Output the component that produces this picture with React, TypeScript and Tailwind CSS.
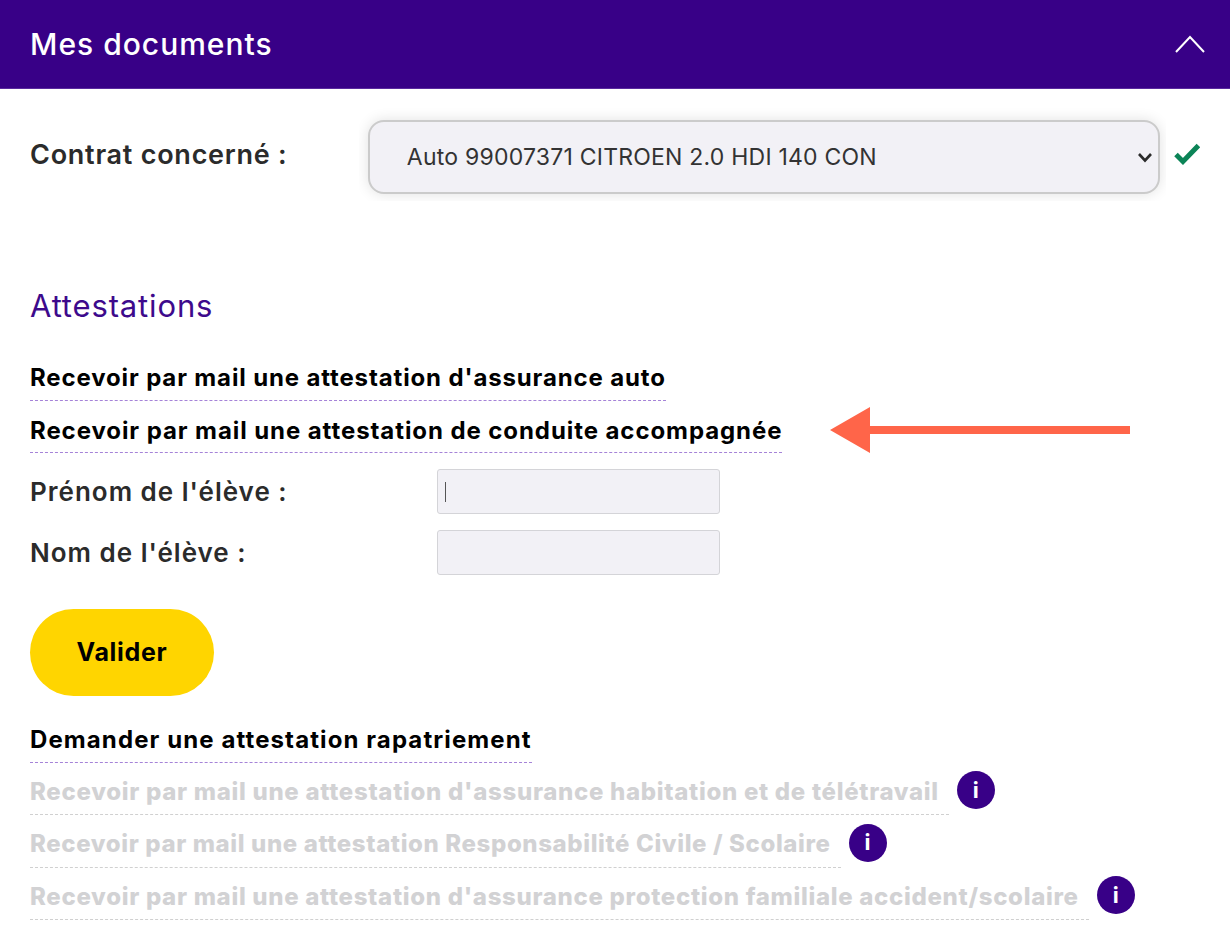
const font = "font-['Inter','Liberation_Sans',sans-serif]";

function InfoBadge() {
  return (
    <span className="ml-2 mb-[6px] flex h-[38px] w-[38px] shrink-0 items-center justify-center rounded-full bg-[#380087] text-[22px] font-bold text-white">
      i
    </span>
  );
}

function DocLink({ label, disabled, info, tracking }: { label: string; disabled?: boolean; info?: boolean; tracking: string }) {
  return (
    <div className="flex h-[52.5px] items-end">
      <span
        className={
          disabled
            ? `h-[52.5px] whitespace-nowrap border-b border-dashed border-[#d0d0d0] pr-[10px] pt-[12px] text-[24px] font-extrabold leading-[33px] text-[#d2d2d4] ${tracking}`
            : `h-[52.5px] whitespace-nowrap border-b border-dashed border-[#a583d8] pt-[13px] text-[24px] font-bold leading-[33px] text-black ${tracking}`
        }
      >
        {label}
      </span>
      {info && <InfoBadge />}
    </div>
  );
}

function Field({ label, focused }: { label: string; focused?: boolean }) {
  return (
    <div className="flex h-[45px] items-center">
      <label className="w-[407px] text-[26px] font-semibold tracking-[1px] text-[#2b2b2b]">{label}</label>
      <div className="flex h-[45px] w-[283px] items-center rounded-[3px] border border-[#d4d4d8] bg-[#f2f1f6] pl-[7px]">
        {focused && <span className="h-[20px] w-px bg-[#555]" />}
      </div>
    </div>
  );
}

export default function App() {
  return (
    <div className={`relative h-[952px] w-[1230px] overflow-hidden bg-white ${font}`}>
      <header className="flex h-[89px] items-center justify-between border-b border-[#5a2a9e] bg-[#380087] pl-[30px] pr-[25px]">
        <h2 className="text-[30px] font-medium tracking-[1px] text-white">Mes documents</h2>
        <svg width="30" height="18" viewBox="0 0 30 18" fill="none" stroke="white" strokeWidth="2">
          <path d="M1 17 L15 2 L29 17" />
        </svg>
      </header>

      <main className="px-[30px]">
        <div className="flex h-[112px] items-start">
          <label className="mt-[48px] w-[330px] text-[27px] leading-[36px] font-semibold tracking-[0.75px] text-[#2b2b2b]">
            Contrat concerné :
          </label>
          <div className="relative overflow-hidden px-[9px] pb-[7px] pt-[31px]">
            <select className="block h-[74px] w-[792px] appearance-none rounded-[16px] border-2 border-[#cbcbcb] bg-[#f2f1f6] pl-[37px] pr-1 text-[23px] tracking-[0.22px] text-[#333] shadow-[0_0_14px_rgba(0,0,0,0.12)] outline-none">
              <option>Auto 99007371 CITROEN 2.0 HDI 140 CON</option>
            </select>
            <svg className="absolute left-[778px] top-[63px]" width="16" height="11" viewBox="0 0 16 11" fill="none" stroke="#2b2b2b" strokeWidth="2.6">
              <path d="M2 2 L8 8.5 L14 2" />
            </svg>
          </div>
          <svg className="mt-[54px] ml-[8px]" width="26" height="22" viewBox="0 0 26 22" fill="none" stroke="#0b8457" strokeWidth="5">
            <path d="M2 11.5 L9 18.5 L24.5 2.5" />
          </svg>
        </div>

        <h3 className="mt-[84px] text-[31px] leading-[42px] font-normal tracking-[0.85px] text-[#3d0a8c]">Attestations</h3>

        <div className="mt-[21px]">
          <DocLink tracking="tracking-[0.86px]" label="Recevoir par mail une attestation d'assurance auto" />
          <DocLink tracking="tracking-[0.92px]" label="Recevoir par mail une attestation de conduite accompagnée" />
        </div>

        <div className="mt-[16px] flex flex-col gap-[16px]">
          <Field label="Prénom de l'élève :" focused />
          <Field label="Nom de l'élève :" />
        </div>

        <button className="mt-[34px] h-[87px] w-[184px] rounded-[44px] bg-[#ffd500] text-[25px] font-bold tracking-[0.7px] text-black">
          Valider
        </button>

        <div className="mt-[14px]">
          <DocLink tracking="tracking-[1.1px]" label="Demander une attestation rapatriement" />
          <DocLink disabled info tracking="tracking-[0.7px]" label="Recevoir par mail une attestation d'assurance habitation et de télétravail" />
          <DocLink disabled info tracking="tracking-[0.62px]" label="Recevoir par mail une attestation Responsabilité Civile / Scolaire" />
          <DocLink disabled info tracking="tracking-[0.69px]" label="Recevoir par mail une attestation d'assurance protection familiale accident/scolaire" />
        </div>
      </main>

      {/* annotation arrow */}
      <svg className="absolute left-[830px] top-[407px]" width="300" height="46" viewBox="0 0 300 46" fill="#ff6549">
        <path d="M0 23 L40 0 V19 H300 V27 H40 V46 Z" />
      </svg>
    </div>
  );
}
